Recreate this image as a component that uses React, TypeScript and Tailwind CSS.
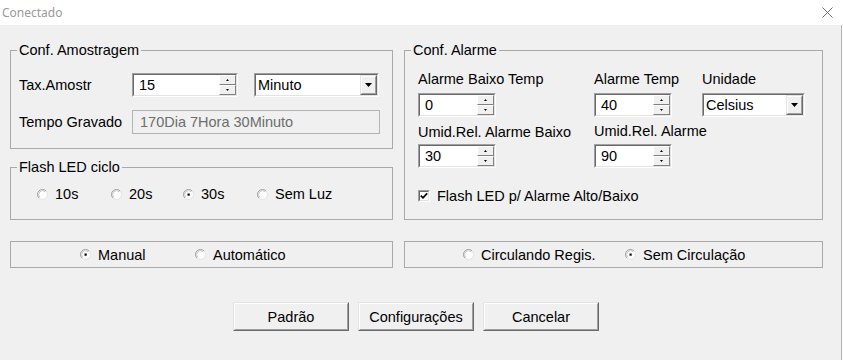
import React from "react";

function Sunken({ className, children }: { className: string; children: React.ReactNode }) {
  return (
    <div className={`flex border border-t-[#a0a0a0] border-l-[#a0a0a0] border-r-white border-b-white ${className}`}>
      <div className="flex flex-1 border border-t-[#696969] border-l-[#696969] border-r-[#e3e3e3] border-b-[#e3e3e3] bg-white">
        {children}
      </div>
    </div>
  );
}

function SpinBtn({ up }: { up: boolean }) {
  return (
    <div className="flex flex-1 items-center justify-center border border-t-white border-l-white border-r-[#808080] border-b-[#808080] bg-[#f0f0f0]">
      <svg width="3" height="2" viewBox="0 0 3 2">
        {up ? <polygon points="1.5,0 3,2 0,2" fill="#000" /> : <polygon points="0,0 3,0 1.5,2" fill="#000" />}
      </svg>
    </div>
  );
}

function Spin({ className, value }: { className: string; value: string }) {
  return (
    <Sunken className={`h-[24px] ${className}`}>
      <div className="flex flex-1 items-center pl-[5px]">{value}</div>
      <div className="flex w-[17px] flex-col">
        <SpinBtn up />
        <SpinBtn up={false} />
      </div>
    </Sunken>
  );
}

function Combo({ className, value }: { className: string; value: string }) {
  return (
    <Sunken className={`h-[24px] ${className}`}>
      <div className="flex flex-1 items-center pl-[2px]">{value}</div>
      <div className="flex w-[17px] border border-t-[#e3e3e3] border-l-[#e3e3e3] border-r-[#696969] border-b-[#696969]">
        <div className="flex flex-1 items-center justify-center border border-t-white border-l-white border-r-[#a0a0a0] border-b-[#a0a0a0] bg-[#f0f0f0]">
          <svg width="7" height="4" viewBox="0 0 7 4">
            <polygon points="0,0 7,0 3.5,4" fill="#000" />
          </svg>
        </div>
      </div>
    </Sunken>
  );
}

function Radio({ label, checked, className }: { label: string; checked?: boolean; className: string }) {
  return (
    <div className={`flex items-center ${className}`}>
      <svg width="11" height="11" viewBox="0 0 11 11" className="shrink-0">
        <circle cx="5.5" cy="5.5" r="5" fill="#fcfcfc" stroke="#e3e3e3" />
        <path d="M1.96 9.04 A5 5 0 0 1 9.04 1.96" stroke="#a0a0a0" fill="none" />
        <path d="M2.8 8.2 A3.8 3.8 0 0 1 8.2 2.8" stroke="#bdbdbd" fill="none" strokeWidth="0.8" />
        {checked && <rect x="4.5" y="4.5" width="2.2" height="2.2" fill="#000" />}
      </svg>
      <span className="ml-[7px] whitespace-nowrap">{label}</span>
    </div>
  );
}

function Group({ title, className, children }: { title?: string; className: string; children: React.ReactNode }) {
  return (
    <div className={`relative border border-[#a9a9a9] ${className}`}>
      {title && (
        <span className="absolute -top-[9px] left-[6px] bg-[#f0f0f0] px-[2px] whitespace-nowrap">{title}</span>
      )}
      {children}
    </div>
  );
}

function Button({ label }: { label: string }) {
  return (
    <div className="flex h-[29px] w-[116px] border border-t-[#e3e3e3] border-l-[#e3e3e3] border-r-[#696969] border-b-[#696969]">
      <div className="flex flex-1 items-center justify-center border border-t-white border-l-white border-r-[#a0a0a0] border-b-[#a0a0a0] bg-[#f0f0f0]">
        {label}
      </div>
    </div>
  );
}

export default function App() {
  return (
    <div className="flex h-[360px] w-[843px] flex-col overflow-hidden bg-white font-['Liberation_Sans',Arial,sans-serif] text-[14.5px] leading-[16px] text-black">
      <div className="flex h-[25px] shrink-0 items-center justify-between pl-[2px] pr-[10px]">
        <span className="font-['Noto_Sans',sans-serif] text-[12px] leading-[16px] text-[#9a9a9a]">Conectado</span>
        <svg width="11" height="11" viewBox="0 0 11 11">
          <path d="M0.5 0.5 L10.5 10.5 M10.5 0.5 L0.5 10.5" stroke="#707070" strokeWidth="1" />
        </svg>
      </div>
      <div className="flex w-[842px] flex-1 flex-col border-r border-[#b5b5b5] bg-[#f0f0f0] pl-[10px] pt-[25px]">
        <div className="flex gap-[11px]">
          <div className="flex w-[383px] flex-col">
            <Group title="Conf. Amostragem" className="h-[99px] pl-[8px] pt-[22px]">
              <div className="flex h-[24px] items-center">
                <span className="w-[113px]">Tax.Amostr</span>
                <Spin className="w-[106px]" value="15" />
                <Combo className="ml-[16px] w-[125px]" value="Minuto" />
              </div>
              <div className="mt-[13px] flex h-[24px] items-center">
                <span className="w-[113px]">Tempo Gravado</span>
                <div className="flex h-[24px] w-[248px] items-center border border-[#b4b4b4] bg-[#f0f0f0] pl-[7px] text-[#6d6d6d]">
                  170Dia 7Hora 30Minuto
                </div>
              </div>
            </Group>
            <Group title="Flash LED ciclo" className="mt-[18px] h-[53px] pl-[26px] pt-[18px]">
              <div className="flex h-[16px] items-center">
                <Radio label="10s" className="w-[74px]" />
                <Radio label="20s" className="w-[72px]" />
                <Radio label="30s" checked className="w-[74px]" />
                <Radio label="Sem Luz" className="w-[90px]" />
              </div>
            </Group>
            <Group className="mt-[21px] flex h-[27px] items-center pl-[69px]">
              <Radio label="Manual" checked className="w-[115px]" />
              <Radio label="Automático" className="w-[120px]" />
            </Group>
          </div>
          <div className="flex w-[419px] flex-col">
            <Group title="Conf. Alarme" className="h-[170px] pl-[13px] pt-[20px]">
              <div className="flex h-[16px] items-center">
                <span className="w-[176px]">Alarme Baixo Temp</span>
                <span className="w-[108px]">Alarme Temp</span>
                <span>Unidade</span>
              </div>
              <div className="mt-[6px] flex h-[24px] items-center">
                <div className="w-[176px]">
                  <Spin className="w-[78px]" value="0" />
                </div>
                <div className="w-[108px]">
                  <Spin className="w-[78px]" value="40" />
                </div>
                <Combo className="w-[103px]" value="Celsius" />
              </div>
              <div className="mt-[7px] flex h-[16px] items-center">
                <span className="w-[176px]">Umid.Rel. Alarme Baixo</span>
                <span className="-mt-[3px] w-[160px]">Umid.Rel. Alarme</span>
              </div>
              <div className="mt-[4px] flex h-[24px] items-center">
                <div className="w-[176px]">
                  <Spin className="w-[78px]" value="30" />
                </div>
                <Spin className="w-[78px]" value="90" />
              </div>
              <div className="mt-[20px] flex h-[16px] items-center">
                <div className="flex h-[12px] w-[12px] border border-t-[#a0a0a0] border-l-[#a0a0a0] border-r-white border-b-white">
                  <div className="flex flex-1 items-center justify-center border border-t-[#696969] border-l-[#696969] border-r-[#e3e3e3] border-b-[#e3e3e3] bg-white">
                    <svg width="8" height="8" viewBox="0 0 8 8">
                      <path d="M0.8 3.6 L3 5.8 L7.2 1.4" stroke="#000" strokeWidth="1.7" fill="none" />
                    </svg>
                  </div>
                </div>
                <span className="ml-[7px]">Flash LED p/ Alarme Alto/Baixo</span>
              </div>
            </Group>
            <Group className="mt-[21px] flex h-[27px] items-center pl-[58px]">
              <Radio label="Circulando Regis." className="w-[162px]" />
              <Radio label="Sem Circulação" checked className="w-[140px]" />
            </Group>
          </div>
        </div>
        <div className="ml-[223px] mt-[34px] flex gap-[9px]">
          <Button label="Padrão" />
          <Button label="Configurações" />
          <Button label="Cancelar" />
        </div>
      </div>
    </div>
  );
}
